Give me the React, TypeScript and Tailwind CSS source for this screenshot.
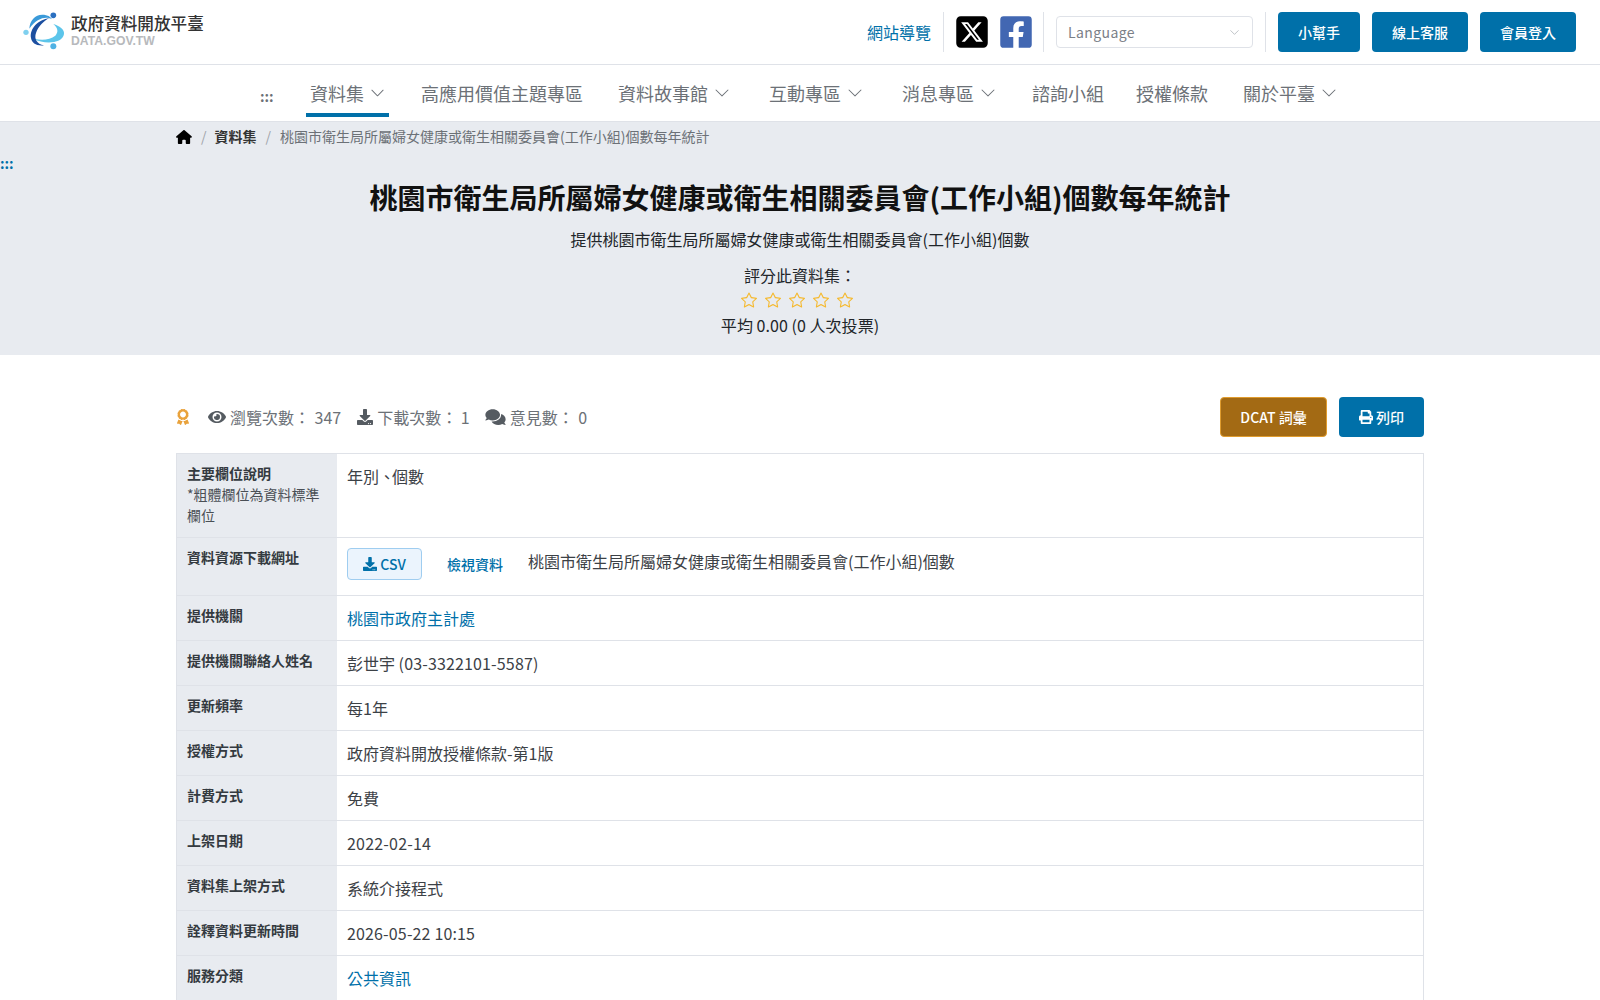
import React from "react";
import { ChevronDown } from "lucide-react";
import { FaDownload, FaEye, FaComments, FaPrint, FaAward, FaFacebookSquare } from "react-icons/fa";
import { FaSquareXTwitter, FaHouse } from "react-icons/fa6";
import { BsChevronDown, BsStar } from "react-icons/bs";

function Logo() {
  return (
    <svg width="50" height="48" viewBox="0 0 150 144" className="shrink-0 -ml-[4px]">
      <path d="M42 92C70 110 128 108 132 78C134 64 118 54 100 48C114 60 116 72 106 83C90 96 65 98 42 92Z" fill="#5cc5ea" />
      <path d="M28 62C30 35 50 15 78 22C90 25 95 30 95 34C80 24 50 30 28 62Z" fill="#3a9ad9" />
      <path d="M88 30C55 35 28 62 33 90C35 105 50 115 72 112C50 108 42 92 48 75C55 55 70 40 88 30Z" fill="#1c4fa0" />
      <circle cx="100" cy="22" r="8.5" fill="#2a6fc0" />
      <circle cx="18" cy="73" r="8" fill="#7fd0ef" />
      <circle cx="100" cy="115" r="9" fill="#4fb2e4" />
    </svg>
  );
}

const Nav = ({ label, chev, active, className = "" }: { label: string; chev?: boolean; active?: boolean; className?: string }) => (
  <div className={`h-[52px] px-1 pt-[8px] flex items-center gap-[6px] text-[18px] text-[#6c7177] border-b-4 ${active ? "border-[#0070a9]" : "border-transparent"} ${className}`}>
    <span className="whitespace-nowrap">{label}</span>
    {chev && <BsChevronDown size={16} />}
  </div>
);

const Row = ({ label, children, h = "h-[45px]" }: { label: React.ReactNode; children: React.ReactNode; h?: string }) => (
  <div className={`flex border-b border-[#dfe2e8] ${h}`}>
    <div className="w-[160px] shrink-0 bg-[#e8ebf0] px-[10px] pt-[9px] text-[14px] leading-[21px] text-[#343a40]">{label}</div>
    <div className="flex-1 px-[10px] pt-[10px] text-[16px] leading-[24px] text-[#3c4146]">{children}</div>
  </div>
);

const Btn = ({ children, className = "" }: { children: React.ReactNode; className?: string }) => (
  <button className={`h-10 rounded bg-[#0070a9] text-white text-[14px] font-medium flex items-center justify-center ${className}`}>{children}</button>
);

const Stat = ({ icon, children, className = "" }: { icon: React.ReactNode; children: React.ReactNode; className?: string }) => (
  <div className={`flex items-center gap-[4px] ${className}`}>
    {icon}
    <span className="whitespace-pre">{children}</span>
  </div>
);

export default function App() {
  return (
    <div className="h-[1000px] overflow-hidden bg-white font-['Noto_Sans_CJK_TC','Noto_Sans',sans-serif]">
      <header className="h-[65px] border-b border-[#dfe2e8] flex items-center pl-[24px] pr-[24px]">
        <div className="flex items-center gap-[1px] -mt-[1px]">
          <Logo />
          <div className="flex flex-col -mt-[2px]">
            <span className="text-[16.6px] leading-[21px] font-medium text-[#333] whitespace-nowrap">政府資料開放平臺</span>
            <span className="text-[12.2px] leading-[14px] font-bold text-[#b7b9bc] font-['Liberation_Sans',sans-serif]">DATA.GOV.TW</span>
          </div>
        </div>
        <div className="ml-auto flex items-center">
          <a className="text-[16px] text-[#0070a9] w-[76px] whitespace-nowrap">網站導覽</a>
          <div className="h-10 w-px bg-[#dfe2e8] mr-[12px]" />
          <FaSquareXTwitter className="text-black w-[36px] h-[36px] -mx-[2px]" />
          <FaFacebookSquare className="text-[#4267b2] w-[36px] h-[36px] ml-[10px] mr-[9px]" />
          <div className="h-10 w-px bg-[#dfe2e8] mr-[12px]" />
          <div className="w-[197px] h-[32px] border border-[#dfe2e8] rounded flex items-center justify-between pl-[11px] pr-[10px] text-[14px] tracking-[0.4px] text-[#7b8087]">
            Language
            <ChevronDown size={15} strokeWidth={1} className="text-[#9aa0a6]" />
          </div>
          <div className="h-10 w-px bg-[#dfe2e8] ml-[12px] mr-[12px]" />
          <div className="flex gap-3">
            <Btn className="w-[82px]">小幫手</Btn>
            <Btn className="w-[96px]">線上客服</Btn>
            <Btn className="w-[96px]">會員登入</Btn>
          </div>
        </div>
      </header>

      <nav className="h-[57px] border-b border-[#dfe2e8] flex items-start pl-[260px]">
        <div className="h-[52px] pt-[10px] w-[14px] flex items-center text-[14px] text-[#6c7177] mr-[32px] font-bold">:::</div>
        <Nav label="資料集" chev active className="w-[83px] mr-[28px]" />
        <Nav label="高應用價值主題專區" className="mr-[27px]" />
        <Nav label="資料故事館" chev className="mr-[31px]" />
        <Nav label="互動專區" chev className="mr-[31px]" />
        <Nav label="消息專區" chev className="mr-[28px]" />
        <Nav label="諮詢小組" className="mr-[24px]" />
        <Nav label="授權條款" className="mr-[27px]" />
        <Nav label="關於平臺" chev />
      </nav>

      <section className="h-[233px] bg-[#e8ebf0] relative">
        <div className="h-[29px] pl-[176px] flex items-center text-[14px] text-[#6c7177]">
          <FaHouse className="text-black w-[16px] h-[14px] mr-[9px]" />
          <span className="text-[#a0a4aa] mr-[8px]">/</span>
          <span className="font-bold text-[#333] mr-[9px]">資料集</span>
          <span className="text-[#a0a4aa] mr-[9px]">/</span>
          <span>桃園市衛生局所屬婦女健康或衛生相關委員會(工作小組)個數每年統計</span>
        </div>
        <div className="absolute left-0 top-[31px] text-[14px] leading-[20px] font-bold text-[#0070a9]">:::</div>
        <div className="flex flex-col items-center text-black">
          <h1 className="mt-[25px] text-[28px] leading-[42px] font-bold text-[#111]">桃園市衛生局所屬婦女健康或衛生相關委員會(工作小組)個數每年統計</h1>
          <p className="mt-[9px] text-[16px] leading-[24px] text-[#212529]">提供桃園市衛生局所屬婦女健康或衛生相關委員會(工作小組)個數</p>
          <p className="mt-[12px] text-[16px] leading-[24px] text-[#212529]">評分此資料集：</p>
          <div className="flex gap-[8px] text-[#f5b92e] h-[24px] items-center mt-[1px] -ml-[6px]">
            {[0, 1, 2, 3, 4].map((i) => (
              <BsStar key={i} className="w-[16px] h-[16px]" />
            ))}
          </div>
          <p className="text-[16px] leading-[26px] tracking-[0.05px] text-[#212529]">平均 0.00 (0 人次投票)</p>
        </div>
      </section>

      <main className="w-[1248px] mx-auto">
        <div className="mt-[42px] h-[40px] flex items-center text-[16px] text-[#6c7177]">
          <FaAward className="text-[#e9a23b] w-[14px] h-[16px] mr-[18px]" />
          <Stat icon={<FaEye className="w-[18px] h-[18px] text-[#555b61]" />} className="mr-[16px]">瀏覽次數：<span className="ml-[1px]"> 347</span></Stat>
          <Stat icon={<FaDownload className="w-[16px] h-[16px] text-[#555b61]" />} className="mr-[15px]">下載次數： 1</Stat>
          <Stat icon={<FaComments className="w-[21px] h-[18px] text-[#555b61]" />} className="gap-[3px]">意見數：<span className="ml-[1px]"> 0</span></Stat>
          <div className="ml-auto flex gap-3">
            <button className="w-[107px] h-10 rounded bg-[#a36a14] border border-[#e09c2e] text-white text-[14px] font-medium">DCAT 詞彙</button>
            <Btn className="w-[85px] gap-[3px]"><FaPrint className="w-[14px] h-[14px]" />列印</Btn>
          </div>
        </div>

        <div className="mt-[16px] border border-b-0 border-[#dfe2e8]">
          <Row
            h="h-[84px]"
            label={
              <>
                <b>主要欄位說明</b>
                <br />
                <span className="text-[#4a4f55]">*粗體欄位為資料標準欄位</span>
              </>
            }
          >
            年別<span className="tracking-[-3px]">、</span>個數
          </Row>
          <Row h="h-[58px]" label={<b>資料資源下載網址</b>}>
            <div className="flex items-start">
              <button className="w-[75px] h-[32px] rounded border border-[#9fcdf0] bg-[#ebf4fd] text-[#0070a9] text-[14px] font-medium flex items-center justify-center gap-[3px]">
                <FaDownload className="w-[14px] h-[14px]" />CSV
              </button>
              <a className="ml-[25px] mt-[4px] text-[14px] font-medium text-[#0070a9]">檢視資料</a>
              <span className="ml-[25px] leading-[26px]">桃園市衛生局所屬婦女健康或衛生相關委員會(工作小組)個數</span>
            </div>
          </Row>
          <Row label={<b>提供機關</b>}><a className="text-[#0070a9]">桃園市政府主計處</a></Row>
          <Row label={<b>提供機關聯絡人姓名</b>}>彭世宇 <span className="tracking-[0.15px]">(03-3322101-5587)</span></Row>
          <Row label={<b>更新頻率</b>}>每1年</Row>
          <Row label={<b>授權方式</b>}>政府資料開放授權條款-第1版</Row>
          <Row label={<b>計費方式</b>}>免費</Row>
          <Row label={<b>上架日期</b>}><span className="tracking-[0.2px]">2022-02-14</span></Row>
          <Row label={<b>資料集上架方式</b>}>系統介接程式</Row>
          <Row label={<b>詮釋資料更新時間</b>}><span className="tracking-[0.15px]">2026-05-22 10:15</span></Row>
          <Row label={<b>服務分類</b>}><a className="text-[#0070a9]">公共資訊</a></Row>
        </div>
      </main>
    </div>
  );
}
